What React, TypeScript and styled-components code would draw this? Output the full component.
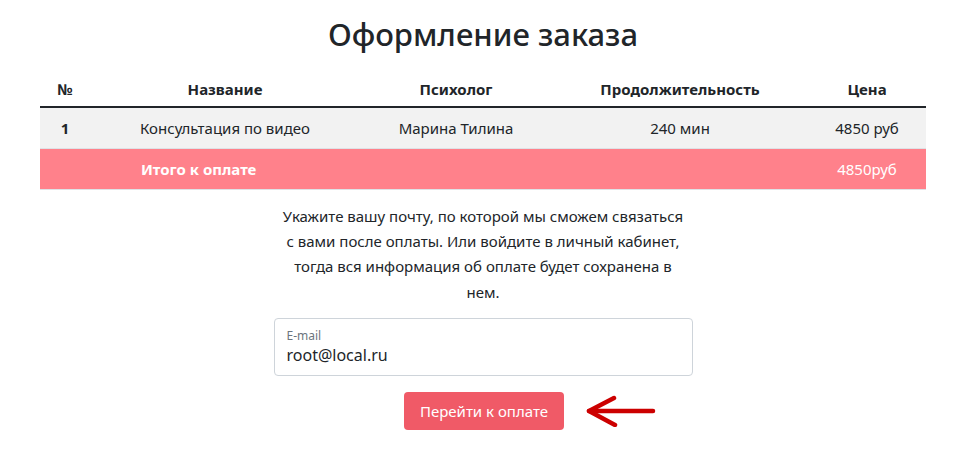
import React from "react";
import styled, { createGlobalStyle } from "styled-components";

const GlobalStyle = createGlobalStyle`
  * {
    box-sizing: border-box;
  }
  body {
    margin: 0;
    background: #fff;
    color: #212529;
    font-family: "Noto Sans", "Open Sans", sans-serif;
    font-size: 16px;
  }
`;

const Page = styled.div`
  width: 957px;
  padding: 13px 31px 0 40px;
  display: flex;
  flex-direction: column;
  align-items: center;
`;

const Title = styled.h1`
  margin: 0 0 15px;
  font-size: 31px;
  font-weight: 500;
  line-height: 43px;
  color: #212529;
`;

const Table = styled.div`
  width: 886px;
  display: grid;
  grid-template-columns: 50px 270px 192px 256px 118px;
`;

interface RowProps {
  variant?: "head" | "body" | "total";
}

const Row = styled.div<RowProps>`
  display: contents;
`;

const Cell = styled.div<RowProps & { align?: "left" | "center"; strong?: boolean }>`
  height: ${({ variant }) => (variant === "head" ? "37px" : "41px")};
  display: flex;
  align-items: center;
  justify-content: ${({ align }) => (align === "left" ? "flex-start" : "center")};
  padding-left: ${({ align }) => (align === "left" ? "51px" : "0")};
  font-size: 15px;
  white-space: nowrap;
  font-weight: ${({ variant, strong }) =>
    strong || variant === "head" || variant === "total" ? 700 : 400};
  background: ${({ variant }) =>
    variant === "body" ? "#f2f2f2" : variant === "total" ? "#ff818b" : "transparent"};
  color: ${({ variant }) => (variant === "total" ? "#fff" : "#212529")};
  border-bottom: ${({ variant }) =>
    variant === "head" ? "2px solid #212529" : "1px solid #dee2e6"};
`;

const TotalSum = styled.span`
  font-weight: 400;
`;

const Note = styled.p`
  width: 440px;
  margin: 14px 0 0;
  text-align: center;
  font-size: 15px;
  line-height: 25.2px;
`;

const Field = styled.label`
  width: 419px;
  height: 58px;
  margin-top: 13px;
  border: 1px solid #ced4da;
  border-radius: 4px;
  padding: 9px 12px 0;
  display: flex;
  flex-direction: column;
`;

const FieldLabel = styled.span`
  font-size: 12px;
  line-height: 16px;
  color: #6c757d;
`;

const FieldInput = styled.input`
  border: none;
  outline: none;
  padding: 0;
  font-family: inherit;
  font-size: 16px;
  line-height: 22px;
  color: #212529;
  background: transparent;
`;

const Actions = styled.div`
  margin-top: 16px;
  display: flex;
  align-items: center;
  gap: 22px;
  padding-left: 94px;
`;

const PayButton = styled.button`
  width: 160px;
  height: 38px;
  border: none;
  border-radius: 4px;
  background: #f05a67;
  color: #fff;
  font-family: inherit;
  font-size: 15px;
  cursor: pointer;
`;

const Arrow = () => (
  <svg width="70" height="32" viewBox="0 0 70 32">
    <g stroke="#cc0000" strokeWidth="4.5" strokeLinecap="round" strokeLinejoin="round" fill="none">
      <path d="M3 16 H67" />
      <path d="M28 3 L3 16 L29 30" />
    </g>
  </svg>
);

const columns = ["№", "Название", "Психолог", "Продолжительность", "Цена"];
const order = ["1", "Консультация по видео", "Марина Тилина", "240 мин", "4850 руб"];
const noteLines = [
  "Укажите вашу почту, по которой мы сможем связаться",
  "с вами после оплаты. Или войдите в личный кабинет,",
  "тогда вся информация об оплате будет сохранена в",
  "нем.",
];

const App = () => (
  <>
    <GlobalStyle />
    <Page>
      <Title>Оформление заказа</Title>
      <Table>
        <Row variant="head">
          {columns.map((c) => (
            <Cell key={c} variant="head">
              {c}
            </Cell>
          ))}
        </Row>
        <Row variant="body">
          {order.map((c, i) => (
            <Cell key={c} variant="body" strong={i === 0}>
              {c}
            </Cell>
          ))}
        </Row>
        <Row variant="total">
          <Cell variant="total" />
          <Cell variant="total" align="left">
            Итого к оплате
          </Cell>
          <Cell variant="total" />
          <Cell variant="total" />
          <Cell variant="total">
            <TotalSum>4850руб</TotalSum>
          </Cell>
        </Row>
      </Table>
      <Note>
        {noteLines.map((line, i) => (
          <React.Fragment key={i}>
            {line}
            {i < noteLines.length - 1 && <br />}
          </React.Fragment>
        ))}
      </Note>
      <Field>
        <FieldLabel>E-mail</FieldLabel>
        <FieldInput type="email" defaultValue="root@local.ru" />
      </Field>
      <Actions>
        <PayButton>Перейти к оплате</PayButton>
        <Arrow />
      </Actions>
    </Page>
  </>
);

export default App;
